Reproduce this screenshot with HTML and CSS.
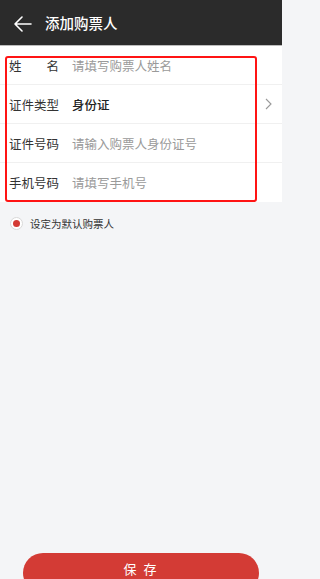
FILE: index.html
```html
<!DOCTYPE html>
<html lang="zh-CN">
<head>
<meta charset="utf-8">
<title>添加购票人</title>
<link rel="stylesheet" href="styles.css">
</head>
<body>
<div class="page">
  <header class="topbar">
    <svg class="back" width="18" height="16" viewBox="0 0 18 16">
      <path d="M8 1 L1 8 L8 15 M1 8 H17" fill="none" stroke="#fff" stroke-width="1.6" stroke-linecap="round" stroke-linejoin="round"/>
    </svg>
    <span class="title">添加购票人</span>
  </header>

  <section class="form">
    <div class="row">
      <span class="label split"><span>姓</span><span>名</span></span>
      <span class="value placeholder">请填写购票人姓名</span>
    </div>
    <div class="row">
      <span class="label">证件类型</span>
      <span class="value strong">身份证</span>
      <svg class="chev" width="7" height="12" viewBox="0 0 7 12">
        <path d="M1 1 L6 6 L1 11" fill="none" stroke="#999" stroke-width="1.1"/>
      </svg>
    </div>
    <div class="row">
      <span class="label">证件号码</span>
      <span class="value placeholder">请输入购票人身份证号</span>
    </div>
    <div class="row last">
      <span class="label">手机号码</span>
      <span class="value placeholder">请填写手机号</span>
    </div>
    <div class="highlight"></div>
  </section>

  <div class="default-row">
    <span class="radio"><span class="dot"></span></span>
    <span class="default-text">设定为默认购票人</span>
  </div>

  <footer class="footer">
    <button class="save">保 存</button>
  </footer>
</div>
</body>
</html>
```

FILE: styles.css
```css
html, body {
  margin: 0;
  padding: 0;
}
body {
  font-family: "Noto Sans CJK SC", "Noto Sans", sans-serif;
  background: #f4f5f7;
}
.page {
  width: 282px;
  height: 579px;
  overflow: hidden;
  display: flex;
  flex-direction: column;
}
.topbar {
  height: 45px;
  background: #2b2b2b;
  border-bottom: 1px solid #bdbdbd;
  display: flex;
  align-items: center;
  padding-left: 14px;
  flex-shrink: 0;
}
.back {
  display: block;
  margin-top: 2px;
}
.title {
  color: #fff;
  font-size: 14.5px;
  margin-left: 13px;
  font-weight: 500;
}
.form {
  position: relative;
  background: #fff;
  flex-shrink: 0;
}
.row {
  height: 38px;
  border-bottom: 1px solid #f0f0f0;
  display: flex;
  align-items: center;
  padding-left: 9px;
  padding-right: 10px;
  font-size: 12.5px;
  white-space: nowrap;
}
.row.last {
  border-bottom: none;
  height: 39px;
}
.label {
  width: 50px;
  color: #333;
  flex-shrink: 0;
}
.label.split {
  display: flex;
  justify-content: space-between;
}
.value {
  margin-left: 13px;
  flex: 1;
}
.placeholder {
  color: #9a9a9a;
}
.strong {
  color: #222;
  font-weight: 500;
}
.chev {
  display: block;
}
.highlight {
  position: absolute;
  left: 5px;
  top: 10px;
  width: 248px;
  height: 142px;
  border: 2.5px solid #ff1414;
  border-radius: 3px;
}
.default-row {
  display: flex;
  align-items: center;
  padding: 14px 0 0 10px;
}
.radio {
  width: 11px;
  height: 11px;
  border: 1px solid #d9d9d9;
  border-radius: 50%;
  background: #fff;
  display: flex;
  align-items: center;
  justify-content: center;
}
.dot {
  width: 7px;
  height: 7px;
  border-radius: 50%;
  background: #d33a34;
}
.default-text {
  margin-left: 7px;
  font-size: 10.5px;
  color: #333;
}
.footer {
  margin-top: auto;
  padding: 0 23px;
  margin-bottom: -14px;
}
.save {
  display: block;
  width: 100%;
  height: 40px;
  border: none;
  border-radius: 20px;
  background: #d33b35;
  color: #fff;
  font-family: "Noto Sans CJK SC", "Noto Sans", sans-serif;
  font-size: 13px;
  letter-spacing: 2px;
  padding: 0;
  padding-bottom: 10px;
}
```
